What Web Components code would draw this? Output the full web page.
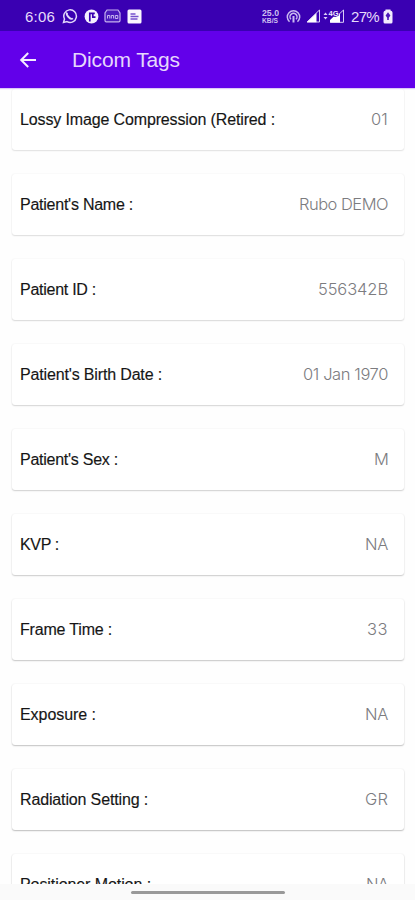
<!DOCTYPE html>
<html lang="en"><head><meta charset="utf-8"><title>Dicom Tags</title>
<style>html,body{margin:0;height:900px;overflow:hidden;background:#fefefe}</style></head><body>
<dicom-screen></dicom-screen>
<script>
// Text that spreads its letters evenly over the width given in its "w" attribute.
class FitText extends HTMLElement {
  connectedCallback() {
    const root = this.attachShadow({mode: 'open'});
    root.innerHTML = '<style>:host{display:block;white-space:nowrap;flex:none}span{display:inline-block}</style><span></span>';
    const s = root.querySelector('span');
    s.textContent = this.getAttribute('text');
    const w = +this.getAttribute('w');
    const natural = s.getBoundingClientRect().width;
    const gap = (w - natural) / s.textContent.length;
    s.style.letterSpacing = gap + 'px';
    this.style.width = w + 'px';
  }
}
customElements.define('fit-text', FitText);

class StatusBar extends HTMLElement {
  constructor() {
    super();
    this.attachShadow({mode: 'open'}).innerHTML = `
<style>
:host{display:flex;height:31px;background:#3a00b2;color:#e6dcfa;align-items:center;box-sizing:border-box;padding:1px 22px 0 25px;font:15px "Liberation Sans",Arial,sans-serif}
svg{display:block;flex:none}
.left,.right{display:flex;align-items:center}
.right{margin-left:auto}
</style>
<div class="left">
<fit-text text="6:06" w="30"></fit-text>
<svg style="margin-left:7px" width="16" height="16" viewBox="0 0 16 16" fill="none" stroke="#e2d8fa"><path d="M1.5 14.5l1-3.5A6.3 6.3 0 1 1 5 13.6z" stroke-width="1.5"/><path d="M5.2 4.6c-.8 1-.2 2.900 1.300 4.400s3.400 2.300 4.400 1.400" stroke-width="1.9"/></svg>
<svg style="margin-left:6px" width="15" height="15" viewBox="0 0 15 15"><circle cx="7.500" cy="7.500" r="6.900" fill="#f4f0ff"/><path d="M5.800 12.500V4.300h5M8.800 5v3.200h2.700" fill="none" stroke="#3a00b2" stroke-width="1.700"/></svg>
<svg style="margin-left:5px" width="17" height="14" viewBox="0 0 17 14"><path d="M3 1h11l2 3v7.500q0 1.300-1.300 1.300H2.300Q1 12.800 1 11.500V4z" fill="#4c1bbd" stroke="#c5b2ee" stroke-width="1.200"/><path d="M3.500 9.500V6.500h2.300v3M7.300 9.500V6.500h2.300v3M11.300 9.500V6.500h2.500v3z" fill="none" stroke="#c8b8ef"/></svg>
<svg style="margin-left:6px" width="15" height="15" viewBox="0 0 15 15"><rect x=".5" y=".5" width="14" height="14" rx="1.500" fill="#faf7ff"/><path d="M3.500 5h5M3.500 7.500h8M3.500 10h7" stroke="#7551cd" stroke-width="1.500"/></svg>
</div>
<div class="right">
<svg width="17" height="15" viewBox="0 0 17 15" fill="#cdbff0" font-family="Liberation Sans,Arial,sans-serif" font-weight="bold"><text x="0" y="7.300" font-size="8.500" textLength="17" lengthAdjust="spacingAndGlyphs">25.0</text><text x="0" y="13.600" font-size="6.500" textLength="16" lengthAdjust="spacingAndGlyphs">KB/S</text></svg>
<svg style="margin-left:7px" width="15" height="15" viewBox="0 0 15 15" fill="none" stroke="#c9baf0" stroke-width="1.500"><path d="M3.500 12.700a6.200 6.200 0 1 1 8 0M5 10.300a3.500 3.500 0 1 1 5 0"/><path d="M7.500 7v6.500" stroke-width="2"/></svg>
<svg style="margin-left:5px" width="15" height="14" viewBox="0 0 15 14"><path d="M1 13L13.500 1v12z" fill="none" stroke="#d9cdf6"/><path d="M1 13.300L10.500 4v9.300z" fill="#fff"/></svg>
<svg style="margin-left:2px" width="22" height="14" viewBox="0 0 22 14"><path d="M7.500 13.300L20.500 1v12.300z" fill="#3a00b2" stroke="#d9cdf6"/><path d="M7 13.500V11l3.500-3.300h2.500L17 4.500v9z" fill="#fff"/><path d="M.5 6L2.500 3.500 4.500 6zM.5 8h4l-2 2.500z" fill="#dacef7"/><text x="5.500" y="6.500" font-family="Liberation Sans,Arial,sans-serif" font-size="7.500" font-weight="bold" fill="#f0e9ff" stroke="#3a00b2" stroke-width="1.200" paint-order="stroke">4G</text></svg>
<fit-text style="margin-left:6px" text="27%" w="28"></fit-text>
<svg style="margin-left:4px" width="10" height="15" viewBox="0 0 10 15"><path d="M2.500 1.500V.5h5v1q2 .3 2 2V13q0 1.500-1.500 1.500H2Q.5 14.500.5 13V3.500q0-1.700 2-2z" fill="#f1ebfe"/><path d="M5 3.300L2.600 6.500 4.200 8.700V11h1.600V8.700l1.600-2.200z" fill="#4b18b9"/></svg>
</div>`;
  }
}
customElements.define('status-bar', StatusBar);

class AppBar extends HTMLElement {
  constructor() {
    super();
    this.attachShadow({mode: 'open'}).innerHTML = `
<style>
:host{display:flex;height:57px;background:#6200ea;color:#e6d8fc;align-items:center;box-sizing:border-box;padding:1px 0 0 19px;font:21px "Liberation Sans",Arial,sans-serif;box-shadow:0 1px 1px #dcc8f8;position:relative}
svg{display:block;margin-right:35px}
</style>
<svg width="18" height="18" viewBox="0 0 18 18" fill="none" stroke="#f4ecff" stroke-width="2"><path d="M17 9H2.500M9.200 2L2.200 9l7 7"/></svg>
<fit-text text="Dicom Tags" w="108"></fit-text>`;
  }
}
customElements.define('app-bar', AppBar);

class TagCard extends HTMLElement {
  connectedCallback() {
    const a = n => this.getAttribute(n);
    this.attachShadow({mode: 'open'}).innerHTML = `
<style>
:host{display:flex;flex:none;height:61px;box-sizing:border-box;padding:0 16px 0 8px;align-items:center;justify-content:space-between;background:#fff;border-radius:3px;font:16px/20px "Liberation Sans",Arial,sans-serif;box-shadow:0 1px 1.500px rgba(0,0,0,var(--shade)),0 0 2px rgba(0,0,0,.07)}
.l{color:#161616;-webkit-text-stroke:.15px #161616}.v{color:#7c7c7f;font-family:Inter,sans-serif;font-size:16.500px;font-weight:300;padding-bottom:2px}
</style>
<fit-text class="l" text="${a('label')}" w="${a('lw')}"></fit-text>
<fit-text class="v" text="${a('value')}" w="${a('vw')}"></fit-text>`;
  }
}
customElements.define('tag-card', TagCard);

class DicomScreen extends HTMLElement {
  constructor() {
    super();
    const rows = [
      ['Lossy Image Compression (Retired :', 255, '01', 17],
      ["Patient's Name :", 113, 'Rubo DEMO', 89],
      ['Patient ID :', 76, '556342B', 70],
      ["Patient's Birth Date :", 142, '01 Jan 1970', 85],
      ["Patient's Sex :", 98, 'M', 14],
      ['KVP :', 39, 'NA', 23],
      ['Frame Time :', 92, '33', 21],
      ['Exposure :', 76, 'NA', 23],
      ['Radiation Setting :', 128, 'GR', 23],
      ['Positioner Motion :', 131, 'NA', 22]
    ];
    this.attachShadow({mode: 'open'}).innerHTML = `
<style>
:host{display:flex;flex-direction:column;width:415px;height:900px;background:#fefefe;overflow:hidden}
status-bar,app-bar{flex:none}
main{height:796px;overflow:hidden;display:flex;flex-direction:column;gap:24px;padding:1px 11px 0 12px;box-sizing:border-box}
footer{height:16px;background:#fafafa;display:flex;justify-content:center;align-items:center}
footer i{width:154px;height:3px;border-radius:2px;background:#999}
</style>
<status-bar></status-bar><app-bar></app-bar>
<main>${rows.map((r, i) => `<tag-card style="--shade:${(.1 + i * .018).toFixed(3)}" label="${r[0]}" lw="${r[1]}" value="${r[2]}" vw="${r[3]}"></tag-card>`).join('')}</main>
<footer><i></i></footer>`;
  }
}
customElements.define('dicom-screen', DicomScreen);
</script></body></html>
